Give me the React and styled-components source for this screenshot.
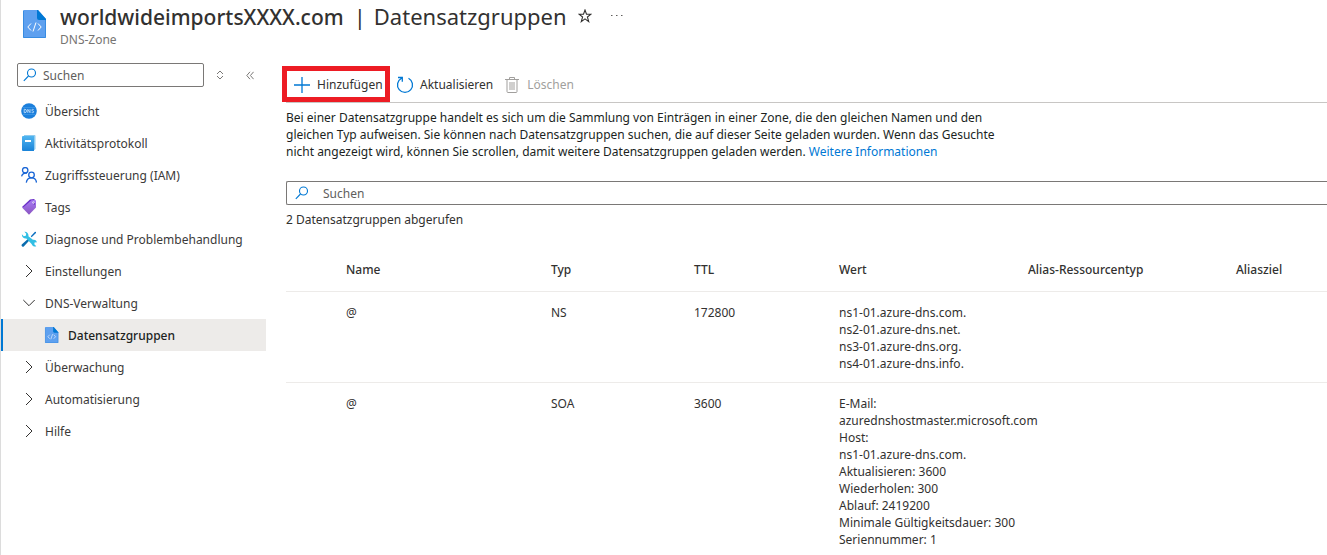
import { useState } from 'react';
import styled, { createGlobalStyle } from 'styled-components';

const GlobalStyle = createGlobalStyle`
  * {
    box-sizing: border-box;
  }

  body {
    margin: 0;
    background: #fff;
    color: #323130;
    font-family: "Noto Sans", "Open Sans", sans-serif;
    font-size: 12px;
    line-height: 17px;
  }

  button, input {
    font: inherit;
    color: inherit;
  }

  svg {
    display: block;
    flex: none;
  }
`

const Page = styled.div`
  min-height: 100vh;
  border-left: 1px solid #dcdcdc;
  overflow: hidden;
`

const Header = styled.header`
  display: flex;
  gap: 13px;
  height: 63px;
  padding: 2px 0 0 22px;
`

const HeaderIcon = styled.div`
  padding-top: 8px;
`

const TitleRow = styled.div`
  display: flex;
  align-items: center;
  height: 28px;
`

const Title = styled.h1`
  margin: 0;
  font-size: 21px;
  line-height: 28px;
  font-weight: 500;
  white-space: nowrap;
`

const TitleSection = styled.span`
  margin-left: 10px;
  font-size: 22px;
  font-weight: 400;
`

const Divider = styled.span`
  margin-right: 8px;
`

const Subtitle = styled.div`
  padding-top: 1px;
  color: #767472;
  line-height: 18px;
`

const IconButton = styled.button`
  display: flex;
  align-items: center;
  justify-content: center;
  width: 16px;
  height: 24px;
  margin-left: ${({ $gap }) => $gap}px;
  padding: 0;
  border: 0;
  background: none;
  cursor: pointer;
`

const Columns = styled.div`
  display: flex;
`

const Sidebar = styled.aside`
  flex: none;
  width: 265px;
`

const SidebarTools = styled.div`
  display: flex;
  align-items: center;
  height: 24px;
  margin-bottom: 8px;
  padding-left: 16px;
`

const SearchBox = styled.label`
  display: flex;
  align-items: center;
  gap: ${({ $wide }) => ($wide ? 14 : 6)}px;
  width: ${({ $wide }) => ($wide ? 'auto' : '187px')};
  height: 24px;
  padding: 0 ${({ $wide }) => ($wide ? 8 : 5)}px;
  border: 1px solid #7a7876;
  border-right-width: ${({ $wide }) => ($wide ? 0 : 1)}px;
  border-radius: ${({ $wide }) => ($wide ? '2px 0 0 2px' : '2px')};
`

const SearchInput = styled.input`
  flex: 1;
  min-width: 0;
  padding: 0;
  border: 0;
  outline: 0;
  background: none;

  &::placeholder {
    color: #605e5c;
    opacity: 1;
  }
`

const NavList = styled.ul`
  margin: 0;
  padding: 0;
  list-style: none;
`

const NavLink = styled.a`
  display: flex;
  align-items: center;
  gap: 8px;
  height: 32px;
  padding-left: ${({ $nested }) => ($nested ? 41 : 20)}px;
  border-left: ${({ $active }) => ($active ? '2px solid #0078d4' : '0')};
  background: ${({ $active }) => ($active ? '#edebe9' : 'none')};
  color: ${({ $active }) => ($active ? '#201f1e' : '#3b3a39')};
  font-weight: ${({ $active }) => ($active ? 500 : 400)};
  text-decoration: none;
  white-space: nowrap;
`

const Main = styled.main`
  flex: 1;
  min-width: 0;
  padding-left: 20px;
`

const Toolbar = styled.div`
  display: flex;
  align-items: center;
  height: 40px;
  padding-top: 2px;
  border-bottom: 1px solid #c8c6c4;
`

const Highlight = styled.div`
  width: 108px;
  height: 36px;
  margin-left: -4px;
  border: 5px solid #ed1c24;
`

const ToolbarButton = styled.button`
  display: flex;
  align-items: center;
  gap: 6px;
  height: 26px;
  padding: 2px 6px 0;
  border: 0;
  background: none;
  white-space: nowrap;
  cursor: pointer;

  &:disabled {
    gap: 8px;
    color: #a19f9d;
    cursor: default;
  }
`

const Description = styled.p`
  max-width: 730px;
  margin: 6px 0 21px;
  color: #201f1e;
`

const InfoLink = styled.a`
  color: #0078d4;
  text-decoration: none;
`

const Count = styled.div`
  padding: 6px 0 20px;
`

const Table = styled.table`
  width: 100%;
  border-collapse: collapse;
  table-layout: fixed;
`

const HeadCell = styled.th`
  width: ${({ $width }) => ($width ? `${$width}px` : 'auto')};
  height: 43px;
  padding: 0;
  border-bottom: 1px solid #edebe9;
  font-weight: 500;
  text-align: left;
  white-space: nowrap;
`

const Cell = styled.td`
  padding: 12px 0 10px;
  vertical-align: top;
  white-space: nowrap;
`

const Row = styled.tr`
  border-bottom: 1px solid #edebe9;

  &:last-child {
    border-bottom: 0;
  }

  &:last-child ${Cell} {
    padding-bottom: 0;
  }
`

const FileIcon = ({ width, height }) => (
  <svg width={width} height={height} viewBox="0 0 24 28">
    <path d="M1 0h14l8 9v18a1 1 0 0 1-1 1H1a1 1 0 0 1-1-1V1a1 1 0 0 1 1-1z" fill="#5ea0ef" />
    <path d="M14 0h1l8 9v1h-7a2 2 0 0 1-2-2z" fill="#0078d4" />
    <path d="M.5 1v26.500h22V10" fill="none" stroke="#2f86de" strokeWidth=".8" />
    <path d="M8 13.500L4.800 17 8 20.500M15 13.500l3.200 3.500-3.200 3.500M13 12.500l-3 9" fill="none" stroke="#fff" />
  </svg>
)

const SearchIcon = ({ size = 14 }) => (
  <svg width={size} height={size} viewBox="0 0 14 14" fill="none" stroke="#0078d4" strokeWidth="1.100">
    <circle cx="8.500" cy="5" r="4" />
    <path d="M5.500 8L.8 12.800" />
  </svg>
)

const DnsIcon = () => (
  <svg width="16" height="16" viewBox="0 0 16 16">
    <circle cx="8" cy="8" r="7.800" fill="#1b7fdc" />
    <path d="M1.500 4.500h13M1.500 11.500h13" stroke="#4a9fea" strokeWidth=".6" />
    <path d="M3.200 6.300v3.400h.6a1.700 1.700 0 0 0 0-3.400zM6.800 9.900V6.300l2.200 3.400V6.100M12.700 6.600c-.8-.5-2-.3-2 .5 0 1 2 .7 2 1.700 0 .9-1.300 1.100-2.100.5" fill="none" stroke="#cfe6fb" strokeWidth=".8" />
  </svg>
)

const LogIcon = () => (
  <svg width="16" height="16" viewBox="0 0 16 16">
    <defs>
      <linearGradient id="book" x2="0" y2="1">
        <stop stopColor="#50b5f0" />
        <stop offset="1" stopColor="#1a83d8" />
      </linearGradient>
    </defs>
    <path d="M3 0h10.500a1 1 0 0 1 1 1v13l-1 1H3z" fill="#8fcbef" />
    <path d="M2 1h11v15H2a1 1 0 0 1-1-1V2a1 1 0 0 1 1-1z" fill="url(#book)" />
    <path d="M4 5h6v2H4z" fill="#fff" />
  </svg>
)

const PeopleIcon = () => (
  <svg width="16" height="16" viewBox="0 0 16 16" fill="none" stroke="#1a66d6" strokeWidth="1.300">
    <circle cx="4.200" cy="3.300" r="2.700" />
    <circle cx="10.500" cy="8" r="2.800" />
    <path d="M.6 9.300A4 4 0 0 1 5.800 6.300M5.300 15.600c.4-3.300 2.400-4.800 5.200-4.800s4.700 1.600 5 4.800" />
  </svg>
)

const TagIcon = () => (
  <svg width="16" height="16" viewBox="0 0 16 16">
    <defs>
      <linearGradient id="tag" x2="0" y2="1">
        <stop stopColor="#a67af4" />
        <stop offset="1" stopColor="#8a55c0" />
      </linearGradient>
    </defs>
    <path d="M9 .5L13 0l1 1-6.500 6L2 9 1 8z" fill="#6a2fc8" />
    <path d="M10.500 1.200l4-.2.500 1V8.500L8 15.800 1.500 9z" fill="url(#tag)" />
    <circle cx="12.500" cy="3.500" r="1.100" fill="#fff" />
    <path d="M12.500 3.500c1.200.2 1.300 1.300.5 2.500" fill="none" stroke="#5a25b0" strokeWidth=".7" />
  </svg>
)

const WrenchIcon = () => (
  <svg width="16" height="16" viewBox="0 0 16 16">
    <path d="M15 1l-1-.3-4.200 4.600.8.9L15 2z" fill="#0b6fc0" />
    <path d="M7.700 7.300L1 13.300a1.400 1.400 0 0 0 2 2l6-6.600z" fill="#0a6cae" />
    <path d="M3.400.8l1.800 2-.4 2-2 .4-1.900-1.900A3.700 3.700 0 0 0 5.300 7.400l5.300 5.500a3.500 3.500 0 0 0 4.700 2.400l-2-2 .3-1.700 1.700-.4.6.6a3.500 3.500 0 0 0-4-3.100L7.400 5.300A3.700 3.700 0 0 0 3.400.8z" fill="#32bfe4" />
  </svg>
)

const ChevronIcon = ({ open }) => (
  <svg width="16" height="16" viewBox="0 0 16 16" fill="none" stroke="#323130">
    <path d={open ? 'M2.300 5L8 10.700 13.700 5' : 'M5 2L11 8l-6 6'} />
  </svg>
)

const StarIcon = () => (
  <svg width="14" height="14" viewBox="0 0 14 14" fill="none" stroke="#323130" strokeWidth="1.100">
    <path d="M7 1l1.500 4.200H13L9.400 8l1.300 4.600L7 9.900l-3.700 2.700L4.600 8 1 5.200h4.500z" />
  </svg>
)

const DotsIcon = () => (
  <svg width="14" height="14" viewBox="0 0 14 14" fill="#605e5c">
    <path d="M1 6h1.500v1H1zM6 6h1.500v1H6zM11 6h1.500v1H11z" />
  </svg>
)

const SortIcon = () => (
  <svg width="8" height="10" viewBox="0 0 8 10" fill="none" stroke="#7a7876">
    <path d="M1 4l3-3 3 3M1 6l3 3 3-3" />
  </svg>
)

const CollapseIcon = () => (
  <svg width="8" height="9" viewBox="0 0 8 9" fill="none" stroke="#7a7876">
    <path d="M4 .8L.8 4.500 4 8.200M7.600.8L4.400 4.500l3.200 3.700" />
  </svg>
)

const PlusIcon = () => (
  <svg width="18" height="18" viewBox="0 0 18 18" stroke="#0078d4" strokeWidth="1.300">
    <path d="M9 1v16M1 9h16" />
  </svg>
)

const RefreshIcon = () => (
  <svg width="18" height="18" viewBox="0 0 18 18" fill="none" stroke="#0078d4" strokeWidth="1.300">
    <path d="M12.500 2.300A7.500 7.500 0 1 1 5.500 2.300M2 1.500h4.300v4.300" />
  </svg>
)

const TrashIcon = () => (
  <svg width="14" height="16" viewBox="0 0 14 16" fill="none" stroke="#a19f9d">
    <path d="M0 2.500h14M4.500 2.500v-2h5v2M2 2.500v12a1 1 0 0 0 1 1h8a1 1 0 0 0 1-1v-12M5 5v8M7 5v8M9 5v8" />
  </svg>
)

const navItems = [
  { label: 'Übersicht', icon: <DnsIcon /> },
  { label: 'Aktivitätsprotokoll', icon: <LogIcon /> },
  { label: 'Zugriffssteuerung (IAM)', icon: <PeopleIcon /> },
  { label: 'Tags', icon: <TagIcon /> },
  { label: 'Diagnose und Problembehandlung', icon: <WrenchIcon /> },
  { label: 'Einstellungen', icon: <ChevronIcon /> },
  { label: 'DNS-Verwaltung', icon: <ChevronIcon open /> },
  { label: 'Datensatzgruppen', icon: <FileIcon width={16} height={16} />, active: true },
  { label: 'Überwachung', icon: <ChevronIcon /> },
  { label: 'Automatisierung', icon: <ChevronIcon /> },
  { label: 'Hilfe', icon: <ChevronIcon /> },
];

const columns = [
  { label: '', width: 60 },
  { label: 'Name', width: 205 },
  { label: 'Typ', width: 143 },
  { label: 'TTL', width: 145 },
  { label: 'Wert', width: 189 },
  { label: 'Alias-Ressourcentyp', width: 208 },
  { label: 'Aliasziel' },
];

const records = [
  {
    name: '@',
    type: 'NS',
    ttl: '172800',
    values: ['ns1-01.azure-dns.com.', 'ns2-01.azure-dns.net.', 'ns3-01.azure-dns.org.', 'ns4-01.azure-dns.info.'],
  },
  {
    name: '@',
    type: 'SOA',
    ttl: '3600',
    values: [
      'E-Mail:',
      'azurednshostmaster.microsoft.com',
      'Host:',
      'ns1-01.azure-dns.com.',
      'Aktualisieren: 3600',
      'Wiederholen: 300',
      'Ablauf: 2419200',
      'Minimale Gültigkeitsdauer: 300',
      'Seriennummer: 1',
    ],
  },
];

const App = () => {
  const [menuQuery, setMenuQuery] = useState('');
  const [recordQuery, setRecordQuery] = useState('');

  return (
    <Page>
      <GlobalStyle />
      <Header>
        <HeaderIcon><FileIcon width={24} height={28} /></HeaderIcon>
        <div>
          <TitleRow>
            <Title>
              worldwideimportsXXXX.com
              <TitleSection><Divider>|</Divider>Datensatzgruppen</TitleSection>
            </Title>
            <IconButton $gap={10} aria-label="Favorit"><StarIcon /></IconButton>
            <IconButton $gap={16} aria-label="Mehr"><DotsIcon /></IconButton>
          </TitleRow>
          <Subtitle>DNS-Zone</Subtitle>
        </div>
      </Header>

      <Columns>
        <Sidebar>
          <SidebarTools>
            <SearchBox>
              <SearchIcon />
              <SearchInput
                aria-label="Menü durchsuchen"
                placeholder="Suchen"
                value={menuQuery}
                onChange={(e) => setMenuQuery(e.target.value)}
              />
            </SearchBox>
            <IconButton $gap={8} aria-label="Sortieren"><SortIcon /></IconButton>
            <IconButton $gap={14} aria-label="Einklappen"><CollapseIcon /></IconButton>
          </SidebarTools>
          <NavList>
            {navItems.map(({ label, icon, active }) => (
              <li key={label}>
                <NavLink href="#" $active={active} $nested={active}>
                  {icon}
                  {label}
                </NavLink>
              </li>
            ))}
          </NavList>
        </Sidebar>

        <Main>
          <Toolbar>
            <Highlight>
              <ToolbarButton><PlusIcon />Hinzufügen</ToolbarButton>
            </Highlight>
            <ToolbarButton><RefreshIcon />Aktualisieren</ToolbarButton>
            <ToolbarButton disabled><TrashIcon />Löschen</ToolbarButton>
          </Toolbar>

          <Description>
            Bei einer Datensatzgruppe handelt es sich um die Sammlung von Einträgen in einer Zone, die den gleichen
            Namen und den gleichen Typ aufweisen. Sie können nach Datensatzgruppen suchen, die auf dieser Seite geladen
            wurden. Wenn das Gesuchte nicht angezeigt wird, können Sie scrollen, damit weitere Datensatzgruppen geladen
            werden. <InfoLink href="#">Weitere Informationen</InfoLink>
          </Description>

          <SearchBox $wide>
            <SearchIcon />
            <SearchInput
              aria-label="Datensatzgruppen durchsuchen"
              placeholder="Suchen"
              value={recordQuery}
              onChange={(e) => setRecordQuery(e.target.value)}
            />
          </SearchBox>
          <Count>2 Datensatzgruppen abgerufen</Count>

          <Table>
            <thead>
              <tr>
                {columns.map(({ label, width }) => (
                  <HeadCell key={label} $width={width}>{label}</HeadCell>
                ))}
              </tr>
            </thead>
            <tbody>
              {records.map(({ name, type, ttl, values }) => (
                <Row key={type}>
                  <Cell />
                  <Cell>{name}</Cell>
                  <Cell>{type}</Cell>
                  <Cell>{ttl}</Cell>
                  <Cell>{values.map((value) => <div key={value}>{value}</div>)}</Cell>
                  <Cell />
                  <Cell />
                </Row>
              ))}
            </tbody>
          </Table>
        </Main>
      </Columns>
    </Page>
  );
}

export default App;
